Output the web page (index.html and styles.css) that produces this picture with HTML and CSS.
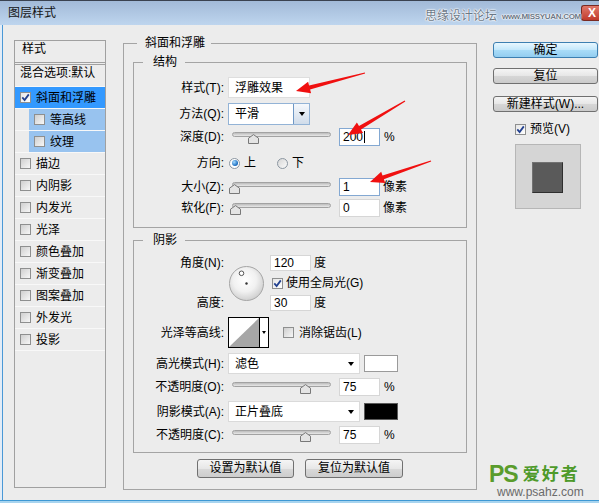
FILE: index.html
```html
<!DOCTYPE html>
<html><head><meta charset="utf-8"><title>图层样式</title><link rel="stylesheet" href="styles.css"></head>
<body>
<div class="window">
  <div class="titlebar">
    <span class="title">图层样式</span>
    <span class="close">X</span>
  </div>
  <div class="content">
    <div class="sidebar">
      <div class="side-head">样式</div>
      <div class="side-list">
        <div class="item blend">混合选项:默认</div>
        <div class="item sel"><span class="cb on"><svg viewBox="0 0 9 9"><path d="M1.3 4.4L3.6 7L7.8 1.4"/></svg></span>斜面和浮雕</div>
        <div class="item child"><span class="cb"></span>等高线</div>
        <div class="item child"><span class="cb"></span>纹理</div>
        <div class="item"><span class="cb"></span>描边</div>
        <div class="item"><span class="cb"></span>内阴影</div>
        <div class="item"><span class="cb"></span>内发光</div>
        <div class="item"><span class="cb"></span>光泽</div>
        <div class="item"><span class="cb"></span>颜色叠加</div>
        <div class="item"><span class="cb"></span>渐变叠加</div>
        <div class="item"><span class="cb"></span>图案叠加</div>
        <div class="item"><span class="cb"></span>外发光</div>
        <div class="item"><span class="cb"></span>投影</div>
      </div>
    </div>

    <div class="main group">
      <div class="legend main-legend">斜面和浮雕</div>

      <div class="group box struct">
        <div class="legend box-legend">结构</div>
        <div class="row r-style">
          <span class="lbl">样式(T):</span>
          <span class="field">浮雕效果</span>
        </div>
        <div class="row r-method">
          <span class="lbl">方法(Q):</span>
          <span class="combo">平滑<span class="dd"><span class="tri"></span></span></span>
        </div>
        <div class="row r-depth">
          <span class="lbl">深度(D):</span>
          <span class="slider"><span class="track"></span><svg class="thumb" style="left:16px" viewBox="0 0 11 10"><path d="M0.5 9.5V4.2L5.5 0.6L10.5 4.2V9.5Z"/></svg></span>
          <span class="num focus">200<span class="caret"></span></span>
          <span class="unit">%</span>
        </div>
        <div class="row r-dir">
          <span class="lbl">方向:</span>
          <span class="radio first"><span class="dot"></span></span>
          <span class="rtext">上</span>
          <span class="radio second"></span>
          <span class="rtext">下</span>
        </div>
        <div class="row r-size">
          <span class="lbl">大小(Z):</span>
          <span class="slider"><span class="track"></span><svg class="thumb" style="left:-3px" viewBox="0 0 11 10"><path d="M0.5 9.5V4.2L5.5 0.6L10.5 4.2V9.5Z"/></svg></span>
          <span class="num focus">1</span>
          <span class="unit px">像素</span>
        </div>
        <div class="row r-soft">
          <span class="lbl">软化(F):</span>
          <span class="slider"><span class="track"></span><svg class="thumb" style="left:-2px" viewBox="0 0 11 10"><path d="M0.5 9.5V4.2L5.5 0.6L10.5 4.2V9.5Z"/></svg></span>
          <span class="num">0</span>
          <span class="unit px">像素</span>
        </div>
      </div>

      <div class="group box shadowbox">
        <div class="legend box-legend">阴影</div>
        <div class="angle">
          <span class="glbl g1">角度(N):</span>
          <svg class="dial" viewBox="0 0 35 35"><defs><radialGradient id="dg" cx="45%" cy="40%" r="62%"><stop offset="0" stop-color="#ffffff"/><stop offset="0.55" stop-color="#f1f1f1"/><stop offset="1" stop-color="#cdcdcd"/></radialGradient></defs><circle cx="17.5" cy="17.5" r="17" fill="url(#dg)" stroke="#a6a6a6"/><circle cx="12.5" cy="7.3" r="2.3" fill="#fff" stroke="#444" stroke-width="0.9"/><circle cx="17.5" cy="17.5" r="1.2" fill="#333"/></svg>
          <span class="cell c1"><span class="num small">120</span><span class="unit deg">度</span></span>
          <span class="cell c2"><span class="cb on"><svg viewBox="0 0 9 9"><path d="M1.3 4.4L3.6 7L7.8 1.4"/></svg></span><span class="cbtext">使用全局光(G)</span></span>
          <span class="glbl g3">高度:</span>
          <span class="cell c3"><span class="num small">30</span><span class="unit deg">度</span></span>
        </div>
        <div class="row r-contour">
          <span class="lbl">光泽等高线:</span>
          <span class="contour"><svg class="curve" viewBox="0 0 30 29" preserveAspectRatio="none"><polygon points="0,29 30,0 30,29"/></svg><span class="cdd"><span class="tri tiny"></span></span></span>
          <span class="cb aa"></span><span class="cbtext aatext">消除锯齿(L)</span>
        </div>
        <div class="row r-mode">
          <span class="lbl">高光模式(H):</span>
          <span class="dropdown">滤色<span class="tri"></span></span>
          <span class="swatch"></span>
        </div>
        <div class="row r-op">
          <span class="lbl">不透明度(O):</span>
          <span class="slider"><span class="track"></span><svg class="thumb" style="left:68px" viewBox="0 0 11 10"><path d="M0.5 9.5V4.2L5.5 0.6L10.5 4.2V9.5Z"/></svg></span>
          <span class="num">75</span>
          <span class="unit">%</span>
        </div>
        <div class="row r-mode2">
          <span class="lbl">阴影模式(A):</span>
          <span class="dropdown">正片叠底<span class="tri"></span></span>
          <span class="swatch black"></span>
        </div>
        <div class="row r-op">
          <span class="lbl">不透明度(C):</span>
          <span class="slider"><span class="track"></span><svg class="thumb" style="left:68px" viewBox="0 0 11 10"><path d="M0.5 9.5V4.2L5.5 0.6L10.5 4.2V9.5Z"/></svg></span>
          <span class="num">75</span>
          <span class="unit">%</span>
        </div>
      </div>

      <div class="btns">
        <span class="btn">设置为默认值</span>
        <span class="btn wide">复位为默认值</span>
      </div>
    </div>

    <div class="right">
      <span class="rbtn primary">确定</span>
      <span class="rbtn reset">复位</span>
      <span class="rbtn newstyle">新建样式(W)...</span>
      <div class="preview-row"><span class="cb on"><svg viewBox="0 0 9 9"><path d="M1.3 4.4L3.6 7L7.8 1.4"/></svg></span><span>预览(V)</span></div>
      <div class="preview"><div class="sq"></div></div>
    </div>
  </div>
  <div class="bottom"></div>

  <div class="wm-title"><span class="wm-cn">思缘设计论坛</span><span class="wm-en">www.MISSYUAN.COM</span></div>

  <svg class="arrows" viewBox="0 0 599 503">
    <polygon points="364.9,72.5 309.1,85.6 308.1,81.7 296,91 311.1,93.3 310.1,89.4 365.1,73.5"/>
    <polygon points="404.7,100.6 359.0,126.1 356.9,122.6 348,135 363.1,133.0 361.0,129.5 405.3,101.4"/>
    <polygon points="430.8,160.5 382.5,175.5 381.2,171.7 370,182 385.2,183.1 383.9,179.3 431.2,161.5"/>
  </svg>

  <div class="logo">
    <div class="logo-top"><span class="ps">PS</span><span class="aihao">爱好者</span></div>
    <div class="logo-url">www.psahz.com</div>
  </div>
</div>
</body></html>
```

FILE: styles.css
```css
* { box-sizing: border-box; }
body {
  margin: 0;
  width: 599px;
  height: 503px;
  overflow: hidden;
  background: #ececec;
  font-family: "Liberation Sans", "Noto Sans CJK SC", sans-serif;
  font-size: 12px;
  line-height: 14px;
  color: #000;
}
.window { position: relative; width: 599px; height: 503px; display: flex; flex-direction: column; }

/* title bar */
.titlebar {
  flex: none; height: 25px;
  border-top: 1px solid #3a4250;
  background: linear-gradient(#a2bad8, #bed5ee);
  display: flex; align-items: center;
}
.title { margin-left: 8px; color: #141414; }
.close {
  margin-left: auto; width: 18px; height: 16px;
  border: 1px solid #7a2a22; border-right: none; border-radius: 3px 0 0 3px;
  background: linear-gradient(#e0786a, #c03a2c);
  color: #fff; font-weight: bold; font-size: 12px; line-height: 14px;
  padding-left: 6px;
}

.content {
  flex: 1; display: flex; align-items: flex-start;
  box-shadow: inset 2px 0 0 #e2ecf7, inset 3px 0 0 #4a98d6;
}
.bottom { flex: none; height: 3px; background: linear-gradient(#3d98d4 0 1px, #a8d4ef 1px); }

/* sidebar */
.sidebar {
  flex: none; width: 92px; height: 448px;
  margin: 15px 0 0 14px;
  border: 1px solid #a0a0a0;
}
.side-head { height: 22px; padding: 1px 0 0 7px; border-bottom: 1px solid #a0a0a0; }
.side-list { margin-top: 1px; border-top: 1px solid #a0a0a0; }
.item {
  height: 22px; display: flex; align-items: center; gap: 5px;
  padding-left: 5px; border-bottom: 1px solid #f8f8f8;
}
.item.blend { align-items: flex-start; padding-top: 1px; }
.item.sel { background: #3399ff; }
.item.child { padding-left: 19px; background: linear-gradient(to right, transparent 14px, #98c3ef 14px); }

/* checkbox */
.cb {
  flex: none; width: 11px; height: 11px;
  border: 1px solid #8e8f8f;
  background: linear-gradient(135deg, #cfcfcf, #f7f7f7);
  display: flex; align-items: center; justify-content: center;
}
.cb.on { background: linear-gradient(135deg, #e6e6e6, #ffffff); }
.cb svg { width: 9px; height: 9px; }
.cb path { fill: none; stroke: #22408f; stroke-width: 1.8; }

/* group boxes */
.group { border: 1px solid #a4a4a4; }
.legend { width: fit-content; height: 16px; line-height: 16px; margin-top: -9px; background: #ececec; }
.main { flex: none; width: 354px; height: 447px; margin: 18px 0 0 17px; }
.main-legend { margin-left: 13px; padding: 0 6px 0 8px; }
.box { margin: 11px 9px 0; }
.box-legend { margin-left: 9px; padding: 0 8px 0 10px; }
.struct { height: 166px; }
.shadowbox { height: 213px; margin-top: 12px; }

/* rows */
.row { display: flex; align-items: center; height: 20px; }
.lbl { flex: none; width: 90px; margin-right: 4px; text-align: right; }
.r-style { margin-top: 7px; height: 21px; }
.r-method { margin-top: 5px; height: 22px; }
.r-depth { margin-top: 2px; }
.r-dir { margin-top: 6px; }
.r-size { margin-top: 4px; }
.r-soft { margin-top: 1px; }
.r-contour { margin-top: 4px; height: 31px; }
.r-mode { margin-top: 5px; height: 21px; }
.r-mode2 { margin-top: 4px; height: 21px; }
.r-op { margin-top: 3px; }

.field {
  flex: none; width: 82px; height: 21px;
  border: 1px solid #dedede; background: #fff;
  padding-left: 6px; display: flex; align-items: center;
}
.combo {
  flex: none; width: 82px; height: 22px;
  border: 1px solid #93b3d6; background: #fff;
  padding-left: 6px; display: flex; align-items: center;
}
.dd {
  margin-left: auto; width: 16px; height: 100%;
  border-left: 1px solid #6f97c4;
  background: linear-gradient(#f5f8fc, #d0dcea);
  display: flex; align-items: center; justify-content: center;
}
.tri { width: 0; height: 0; border-left: 3.5px solid transparent; border-right: 3.5px solid transparent; border-top: 4px solid #000; }
.tri.tiny { border-left-width: 2.5px; border-right-width: 2.5px; border-top-width: 3px; }

.slider { position: relative; flex: none; width: 99px; height: 20px; margin-left: 4px; }
.track {
  display: block; margin-top: 5px; height: 5px;
  border: 1px solid #a2a2a2; border-radius: 3px;
  background: linear-gradient(#bcbcbc, #e8e8e8);
}
.thumb { position: absolute; top: 7px; width: 11px; height: 10px; }
.thumb path { fill: #e4e4e4; stroke: #787878; stroke-width: 1; }

.num {
  flex: none; width: 41px; height: 18px; margin-left: 8px;
  border: 1px solid #d6d6d6; background: #fff;
  padding-left: 3px; line-height: 16px;
  display: flex; align-items: center;
}
.num.focus { border-color: #83a8d2; }
.num.small { height: 16px; margin-left: 0; }
.caret { width: 1px; height: 12px; background: #000; margin-left: 1px; }
.unit { margin-left: 4px; }
.unit.px { margin-left: 3px; }
.unit.deg { margin-left: 3px; }

.radio {
  flex: none; width: 11px; height: 11px; border-radius: 50%;
  border: 1px solid #8b96a1;
  background: linear-gradient(135deg, #d6d6d6, #fbfbfb);
  display: flex; align-items: center; justify-content: center;
}
.radio.first { margin-left: 1px; background: #fff; }
.radio.second { margin-left: 21px; }
.dot { width: 6px; height: 6px; border-radius: 50%; background: radial-gradient(circle at 35% 35%, #a6dbff, #1d70c2 65%, #0c4688); }
.rtext { margin-left: 4px; }

/* angle block */
.angle {
  display: grid; grid-template-columns: 94px 42px auto; grid-template-rows: 20px 20px 20px;
  align-items: center; margin-top: 5px;
}
.glbl { text-align: right; padding-right: 4px; }
.g1 { grid-column: 1; grid-row: 1; }
.g3 { grid-column: 1; grid-row: 3; }
.dial { grid-column: 2; grid-row: 1 / 4; width: 35px; height: 35px; margin-left: 1px; }
.cell { display: flex; align-items: center; grid-column: 3; }
.c1 { grid-row: 1; }
.c2 { grid-row: 2; }
.c3 { grid-row: 3; }
.c2 .cb { margin-left: 2px; }
.cbtext { margin-left: 3px; }

.contour { flex: none; width: 41px; height: 31px; border: 1px solid #000; background: #fff; display: flex; }
.curve { width: 30px; height: 29px; }
.curve polygon { fill: #a6a6a6; }
.cdd { flex: 1; border-left: 1px solid #000; display: flex; align-items: center; justify-content: center; }
.cb.aa { margin-left: 14px; }
.aatext { margin-left: 5px; }

.dropdown {
  flex: none; width: 132px; height: 21px;
  border: 1px solid #dadada; background: #fff;
  padding: 0 5px 0 6px; display: flex; align-items: center;
}
.dropdown .tri { margin-left: auto; }
.swatch { flex: none; width: 34px; height: 17px; margin-left: 4px; border: 1px solid #9a9a9a; background: #fff; }
.swatch.black { background: #000; border-color: #5a5a5a; }

.btns { display: flex; justify-content: center; gap: 11px; margin-top: 6px; }
.btn {
  width: 97px; height: 19px; line-height: 17px; text-align: center;
  border: 1px solid #707070; border-radius: 3px;
  background: linear-gradient(#f5f5f5, #e7e7e7 50%, #d9d9d9 51%, #cdcdcd);
}
.btn.wide { width: 98px; }

/* right column */
.right { flex: none; width: 105px; margin: 17px 0 0 16px; display: flex; flex-direction: column; }
.rbtn {
  height: 16px; line-height: 14px; text-align: center;
  border: 1px solid #707070; border-radius: 3px;
  background: linear-gradient(#f5f5f5, #e6e6e6 50%, #d6d6d6 51%, #cbcbcb);
}
.rbtn.primary { border-color: #3c7fb1; background: linear-gradient(#e8f7fe, #c2e7fb 50%, #a9dcf8 51%, #92cdf0); }
.rbtn.reset { margin-top: 10px; }
.rbtn.newstyle { margin-top: 12px; }
.preview-row { display: flex; align-items: center; gap: 4px; height: 16px; margin-top: 9px; padding-left: 22px; }
.preview {
  width: 66px; height: 65px; margin: 7px 0 0 22px;
  border: 1px solid #b6b6b6; background: #d5d5d5;
  padding: 17px 0 0 16px;
}
.sq { width: 31px; height: 31px; background: #5a5a5a; border: 1px solid; border-color: #727272 #2e2e2e #2e2e2e #727272; }

/* overlays: watermarks and annotation arrows */
.wm-title {
  position: absolute; left: 425px; top: 8px;
  display: flex; align-items: center; gap: 5px;
  color: #6b7786;
  text-shadow: 0 0 1px #fff, 0 0 1px #fff, 0 0 2px #fff, 0 0 2px #fff;
}
.wm-cn { font-family: "Noto Sans CJK SC", sans-serif; font-size: 12px; line-height: 14px; }
.wm-en { font-size: 8px; font-weight: bold; line-height: 10px; margin-top: 4px; letter-spacing: -0.3px; }

.arrows { position: absolute; left: 0; top: 0; width: 599px; height: 503px; pointer-events: none; }
.arrows polygon { fill: #f01010; }

.logo { position: absolute; left: 489px; top: 461px; }
.logo-top { display: flex; align-items: flex-end; height: 25px; }
.ps { font-size: 23px; line-height: 23px; font-weight: bold; color: #5a9c2c; letter-spacing: -1px; }
.aihao { font-family: "Noto Sans CJK SC", sans-serif; font-size: 17px; line-height: 17px; letter-spacing: 2px; margin: 0 0 5px 5px; color: #4e9a2a; font-weight: bold; }
.logo-url { font-size: 12px; line-height: 12px; color: #6a6a6a; margin-left: 8px; }
```
